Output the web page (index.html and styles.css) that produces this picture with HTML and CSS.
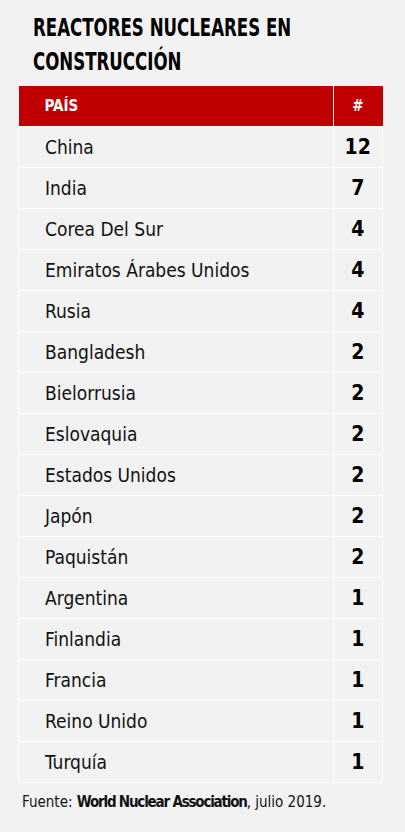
FILE: index.html
```html
<!DOCTYPE html>
<html lang="es">
<head>
<meta charset="utf-8">
<title>Reactores nucleares en construcción</title>
<link rel="stylesheet" href="styles.css">
</head>
<body>
<div class="page">
  <h1 class="title">REACTORES NUCLEARES EN<br>CONSTRUCCIÓN</h1>
  <table class="table">
    <thead>
      <tr><th class="col-country">PAÍS</th><th class="col-num">#</th></tr>
    </thead>
    <tbody>
      <tr><td class="country">China</td><td class="num">12</td></tr>
      <tr><td class="country">India</td><td class="num">7</td></tr>
      <tr><td class="country">Corea Del Sur</td><td class="num">4</td></tr>
      <tr><td class="country">Emiratos Árabes Unidos</td><td class="num">4</td></tr>
      <tr><td class="country">Rusia</td><td class="num">4</td></tr>
      <tr><td class="country">Bangladesh</td><td class="num">2</td></tr>
      <tr><td class="country">Bielorrusia</td><td class="num">2</td></tr>
      <tr><td class="country">Eslovaquia</td><td class="num">2</td></tr>
      <tr><td class="country">Estados Unidos</td><td class="num">2</td></tr>
      <tr><td class="country">Japón</td><td class="num">2</td></tr>
      <tr><td class="country">Paquistán</td><td class="num">2</td></tr>
      <tr><td class="country">Argentina</td><td class="num">1</td></tr>
      <tr><td class="country">Finlandia</td><td class="num">1</td></tr>
      <tr><td class="country">Francia</td><td class="num">1</td></tr>
      <tr><td class="country">Reino Unido</td><td class="num">1</td></tr>
      <tr><td class="country">Turquía</td><td class="num">1</td></tr>
    </tbody>
  </table>
  <p class="source">Fuente: <strong>World Nuclear Association</strong>, julio 2019.</p>
</div>
</body>
</html>
```
FILE: styles.css
```css
html, body {
  margin: 0;
  padding: 0;
  background: #f2f2f2;
}
body {
  font-family: "DejaVu Sans Condensed", "Liberation Sans", sans-serif;
  color: #111;
}
.page {
  padding: 11px 22px 20px 18px;
}
.title {
  margin: 0 0 7px 15px;
  font-size: 24px;
  line-height: 34px;
  font-weight: 700;
  color: #000;
  transform: scaleX(0.77);
  transform-origin: left top;
  white-space: nowrap;
}
.table {
  width: 365px;
  border-collapse: collapse;
  table-layout: fixed;
}
.table th {
  background: #c00000;
  color: #fff;
  font-size: 15px;
  font-weight: 700;
  height: 40px;
  text-align: left;
  padding: 0 0 0 26px;
  border-right: 1px solid #fff;
}
.table th.col-num {
  width: 49px;
  padding: 0;
  text-align: center;
  border-right: none;
}
.table td {
  height: 40px;
  padding: 0;
  border: 1px solid #fff;
}
.table td.country {
  padding-left: 26px;
  font-size: 19px;
  color: #111;
}
.num {
  text-align: center;
  font-size: 21px;
  font-weight: 700;
  color: #000;
}
.source {
  margin: 10px 0 0 4px;
  font-size: 15px;
  color: #111;
}
.source strong {
  font-weight: 700;
  letter-spacing: -1.2px;
}
```
